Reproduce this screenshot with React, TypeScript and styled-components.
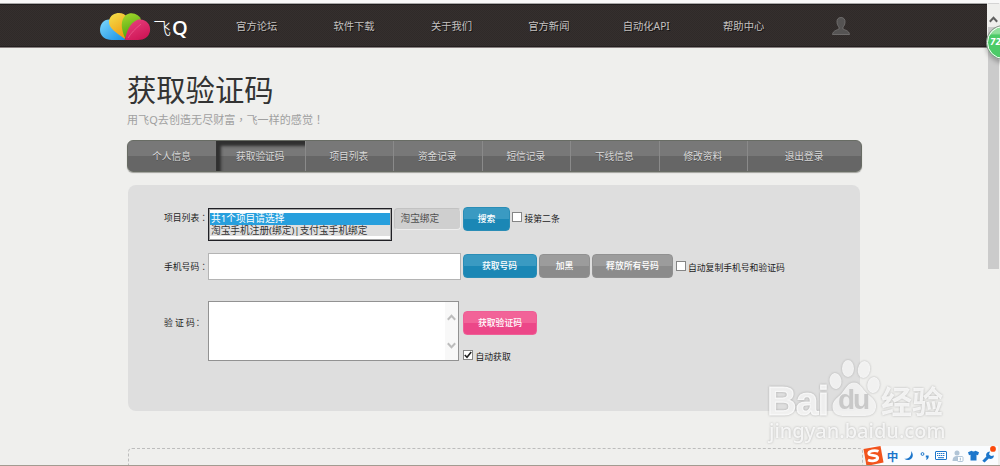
import React from "react";
import styled, { createGlobalStyle, css } from "styled-components";

const GlobalStyle = createGlobalStyle`
  * { box-sizing: border-box; }
  body {
    margin: 0;
    background: #efefed;
    font-family: "Noto Sans", "Noto Sans CJK SC", sans-serif;
    overflow: hidden;
  }
`;

const Window = styled.div`
  position: relative;
  width: 1000px;
  height: 466px;
  overflow: hidden;
  border-top: 3px solid #f8f8f8;
  border-bottom: 1px solid #a39b91;
  display: flex;
`;

const Page = styled.div`
  width: 988px;
  display: flex;
  flex-direction: column;
`;

const Header = styled.header`
  width: 987px;
  height: 45px;
  flex: none;
  padding-left: 99px;
  display: flex;
  align-items: center;
  background: conic-gradient(#352f2e 25%, #2f2a29 0 50%, #352f2e 0 75%, #2f2a29 0) 0 0 / 2px 2px;
  border-top: 1px solid #a9a8a8;
  border-bottom: 1px solid #877f7f;
  box-shadow: inset 0 1px #1f1c1c, inset 0 -1px #242020;
`;

const Logo = styled.div`
  width: 109px;
  display: flex;
  align-items: center;
  color: #fff;
`;

const LogoText = styled.span`
  display: flex;
  align-items: center;
  margin: 5px 0 0 2px;
  font-size: 18px;
  line-height: 24px;
  font-weight: 300;
`;

const LogoLetter = styled.b`
  font: 600 20px/24px "Open Sans", sans-serif;
  margin-left: 1px;
`;

const Nav = styled.nav`
  display: grid;
  grid-template-columns: repeat(7, 97.4px);
  align-items: center;
  justify-items: center;
`;

const NavLink = styled.a`
  padding-top: 1px;
  font-size: 10.3px;
  line-height: 18px;
  color: #c4c1c0;
  text-shadow: 1px 1px #151313;
`;

const Main = styled.main`
  padding: 23px 0 0 127px;
  display: flex;
  flex-direction: column;
`;

const Title = styled.h1`
  margin: 0;
  font-size: 29.3px;
  line-height: 38px;
  height: 38px;
  font-weight: 400;
  color: #333;
`;

const Subtitle = styled.p`
  margin: 0;
  padding-top: 2px;
  font-size: 11px;
  line-height: 16px;
  letter-spacing: 0.08px;
  height: 19px;
  color: #a0a0a0;
`;

/* Full-width punctuation centred in its cell */
const Mark = styled.span`
  font-family: "Noto Sans CJK TC", sans-serif;
`;

const Tabs = styled.div`
  width: 735px;
  height: 32px;
  margin-top: 12px;
  display: grid;
  grid-template-columns: 88px repeat(6, 88.5px) 1fr;
  border: 1px solid #686c64;
  border-radius: 6px;
  overflow: hidden;
  background: linear-gradient(#787878 0 50%, #666 50% 100%);
  box-shadow: 0 1px 1px #a0a09c;
`;

const Tab = styled.a<{ $active?: boolean }>`
  display: flex;
  align-items: center;
  justify-content: center;
  padding-right: 1px;
  font-size: 9.7px;
  color: #d8d8d8;
  text-shadow: 0 1px #505050;
  & + & { border-left: 1px solid #8a8a8a; }
  ${(p) => p.$active && css`
    && { border-left-color: #333; }
    box-shadow: inset 5px 6px 3px -1px #303030;
  `}
`;

const Panel = styled.section`
  width: 732px;
  height: 226px;
  margin: 13px 0 0 1px;
  padding: 22px 0 0 36px;
  border-radius: 8px;
  background: #dedede;
  display: flex;
  flex-direction: column;
`;

const Row = styled.div<{ $height: number }>`
  display: flex;
  align-items: flex-start;
  height: ${(p) => p.$height}px;
`;

const Label = styled.label<{ $top: number; $spacing?: number }>`
  width: 44px;
  flex: none;
  white-space: nowrap;
  padding-top: ${(p) => p.$top}px;
  font-size: 8.8px;
  line-height: 12px;
  letter-spacing: ${(p) => p.$spacing ?? 0}px;
  color: #1c1c1c;
`;

const TightMark = styled(Mark)`
  margin-left: -3.5px;
`;

const ListBox = styled.div`
  width: 184px;
  height: 33px;
  margin-top: 1px;
  padding: 4px 0;
  border: 1px solid #202025;
  outline: 1px solid rgba(50, 50, 50, 0.45);
  outline-offset: -2px;
  background: #fff;
`;

const Option = styled.div<{ $selected?: boolean }>`
  height: ${(p) => (p.$selected ? 12 : 11)}px;
  margin: 0 1px;
  padding-left: 1px;
  font-size: 9.7px;
  line-height: 11px;
  white-space: nowrap;
  color: ${(p) => (p.$selected ? "#fff" : "#333")};
  background: ${(p) => (p.$selected ? "#279fdd" : "#dfdfdf")};
`;

const Keyword = styled.div`
  width: 67px;
  height: 22px;
  margin: 1px 0 0 1.5px;
  padding-left: 6px;
  border: 1px solid #c2c2c2;
  border-right-color: #eee;
  border-bottom-color: #eee;
  border-radius: 4px;
  background: #cfcfcf;
  font-size: 9.7px;
  line-height: 19px;
  color: #505050;
`;

const tones = {
  blue: ["#3a9ac2", "#1b87b5", "#2a8db6"],
  grey: ["#9c9c9c", "#8b8b8b", "#919191"],
  pink: ["#f26398", "#ec4788", "#ef5e96"],
};

const Button = styled.button<{ $tone: keyof typeof tones; $width: number; $gap?: number }>`
  width: ${(p) => p.$width}px;
  height: 24px;
  flex: none;
  margin: 0 0 0 ${(p) => p.$gap ?? 3}px;
  padding: 0;
  border: 1px solid ${(p) => tones[p.$tone][2]};
  border-radius: 4px;
  background: linear-gradient(${(p) => tones[p.$tone][0]} 0 50%, ${(p) => tones[p.$tone][1]} 50% 100%);
  color: #fff;
  font: 500 8.8px/20px "Noto Sans", "Noto Sans CJK SC", sans-serif;
  white-space: nowrap;
`;

const Check = styled.label<{ $top: number; $left: number }>`
  display: flex;
  align-items: flex-start;
  gap: 2.5px;
  margin: ${(p) => p.$top}px 0 0 ${(p) => p.$left}px;
  font-size: 8.8px;
  line-height: 13px;
  white-space: nowrap;
  color: #1c1c1c;
`;

const Box = styled.span`
  width: 10px;
  height: 10px;
  border: 1px solid #858585;
  background: #fff;
  display: flex;
`;

const CheckText = styled.span`
  padding-top: 1px;
`;

const PhoneInput = styled.div`
  width: 253px;
  height: 27px;
  border: 1px solid #b4b4b4;
  background: #fff;
`;

const PhoneActions = styled.div`
  display: flex;
  align-items: flex-start;
  padding-top: 1px;
`;

const CodeArea = styled.div`
  width: 251px;
  height: 60px;
  border: 1px solid #929292;
  background: #fff;
  display: flex;
  justify-content: flex-end;
`;

const AreaScroll = styled.div`
  width: 13px;
  padding: 12px 0 11px;
  background: #f8f8f8;
  display: flex;
  flex-direction: column;
  justify-content: space-between;
  align-items: center;
`;

const CodeActions = styled.div`
  display: flex;
  flex-direction: column;
  padding-top: 10px;
`;

const DashedPanel = styled.section`
  width: 735px;
  height: 40px;
  margin: 37px 0 0 1px;
  border: 1px dashed #bdbdbd;
  border-radius: 4px;
`;

const Scrollbar = styled.aside`
  width: 11px;
  border-top: 1px solid #d4d4d4;
  display: flex;
  flex-direction: column;
  align-items: center;
  padding-top: 12px;
`;

const Thumb = styled.div`
  width: 11px;
  height: 242px;
  margin-top: 4px;
  background: #cbcbcb;
`;

const Badge = styled.div`
  position: absolute;
  left: 986px;
  top: 22px;
  width: 35px;
  height: 35px;
  border: 1px solid #909090;
  outline: 1px solid #fff;
  outline-offset: -2px;
  border-radius: 50%;
  background: linear-gradient(#92df9e 0 22%, #4dcb68 28%);
  box-shadow: 0 3px 4px rgba(0, 0, 0, 0.25);
  color: #fff;
  font: italic bold 8px/33px "DejaVu Sans", sans-serif;
  padding-left: 3px;
`;

const Watermark = styled.div`
  position: absolute;
  left: 767px;
  top: 355px;
  width: 184px;
  height: 88px;
  color: rgba(255, 255, 255, 0.8);
  filter: drop-shadow(0 0 0.8px rgba(120, 120, 120, 0.6));
`;

const Brand = styled.div`
  height: 59px;
  display: flex;
  align-items: flex-end;
`;

const BrandLatin = styled.b`
  width: 61px;
  font: bold 41px/41px "Liberation Sans", sans-serif;
  letter-spacing: -0.8px;
  margin-bottom: -5px;
  -webkit-text-stroke: 1px rgba(255, 255, 255, 0.8);
`;

const BrandHan = styled.b`
  font: bold 31px/32px "Noto Sans CJK SC", sans-serif;
  margin: 0 0 1px 1px;
  white-space: nowrap;
`;

const PawWrap = styled.div`
  position: relative;
  width: 52px;
  height: 58px;
  flex: none;
`;

const PawText = styled.b`
  position: absolute;
  left: 10px;
  top: 27px;
  font: bold 28px/28px "Liberation Sans", sans-serif;
  letter-spacing: -2px;
  color: #c9c9c9;
`;

const Site = styled.div`
  margin: 2px 0 0 2px;
  font: 500 20px/24px "Noto Sans", sans-serif;
`;

const ImeBar = styled.div`
  position: absolute;
  left: 862px;
  top: 443px;
  width: 136px;
  height: 20px;
  display: flex;
  align-items: center;
  background: linear-gradient(90deg, transparent 8px, #fafcfe 8px);
  border-bottom: 1px solid #c8d5e2;
  background-clip: padding-box;
`;

const ImeSlot = styled.span<{ $width: number }>`
  width: ${(p) => p.$width}px;
  display: flex;
  justify-content: center;
  color: #1c76cb;
  font: bold 11.5px/16px "Noto Sans CJK SC", sans-serif;
`;

const CloudSvg = styled.svg`
  margin-top: 1px;
`;

const Cloud = () => (
  <CloudSvg width="52" height="29" viewBox="0 0 52 29">
    <defs>
      <linearGradient id="sky" x1="0" y1="0" x2="1" y2="1">
        <stop stopColor="#7ed8fb" /><stop offset="1" stopColor="#168fe5" />
      </linearGradient>
      <linearGradient id="sun" x1="0" y1="0" x2=".5" y2="1">
        <stop stopColor="#f4e24d" /><stop offset="1" stopColor="#f19c12" />
      </linearGradient>
      <linearGradient id="leaf" x1="0" y1="0" x2=".3" y2="1">
        <stop stopColor="#a9db2c" /><stop offset="1" stopColor="#4ba412" />
      </linearGradient>
      <linearGradient id="rose" x1="0" y1="0" x2=".6" y2="1">
        <stop stopColor="#e94480" /><stop offset="1" stopColor="#cf1657" />
      </linearGradient>
    </defs>
    <path d="M26 28H13C6 28 1 24 1 18C1 11 6 6 13 8C19 11 24 19 26 28Z" fill="url(#sky)" />
    <path d="M26 27C18 21 9 16 10 9C11 3 16 1 20 1C27 1 31 7 29 14Z" fill="url(#sun)" />
    <path d="M26 26C22 17 21 8 27 3C33-1 41 3 42 8L36 17Z" fill="url(#leaf)" />
    <path d="M26 28C27 20 31 11 38 8C46 6 52 12 51 19C50 25 45 28 39 28Z" fill="url(#rose)" />
    <path d="M29 26C32 21 36 17 42 12" stroke="#f67aa5" strokeWidth=".8" fill="none" opacity=".6" />
  </CloudSvg>
);

const UserIcon = () => (
  <svg width="18" height="18" viewBox="0 0 18 18">
    <path
      d="M9 .5c3 0 4.300 2 4 5-.3 2.500-1 3.500-2 4.500v2c1 .8 6.300 1.500 6.500 5.500H.5c.2-4 5.500-4.700 6.500-5.500v-2c-1-1-1.700-2-2-4.500-.3-3 1-5 4-5Z"
      fill="#555353" stroke="#777575" strokeWidth=".8"
    />
  </svg>
);

const Chevron = ({ down, color }: { down?: boolean; color: string }) => (
  <svg width="9" height="7" viewBox="0 0 9 7">
    <path d={down ? "M.8 1.200 4.500 5.200 8.200 1.200" : "M.8 5.800 4.500 1.800 8.200 5.800"} fill="none" stroke={color} strokeWidth="2" />
  </svg>
);

const Paw = () => (
  <svg width="52" height="58" viewBox="0 0 52 58" fill="#fff" fillOpacity=".8">
    <ellipse cx="7.500" cy="22" rx="6" ry="8" transform="rotate(-8 7.500 22)" />
    <ellipse cx="20" cy="9.500" rx="6" ry="8.500" />
    <ellipse cx="36" cy="10.500" rx="6.200" ry="8.500" transform="rotate(10 36 10.500)" />
    <ellipse cx="45.500" cy="26" rx="6.200" ry="8" transform="rotate(8 45.500 26)" />
    <path d="M26 23.500c6 0 8 6 13 11 5 4 10 8 9 14-1 8-8 8.500-13 8.500H17C10 57 5 55 4.500 48.500 4 41 10 39 14 34c4-5 6-10.500 12-10.500Z" />
  </svg>
);

const SLogo = () => (
  <svg width="21" height="20" viewBox="0 0 21 20">
    <path d="M.5 3 17.500 0 20.500 16.500 3.500 20Z" fill="#f2541d" />
    <path d="M15.500 5.300C12 3.800 5.500 4.800 5.800 7.600 6 10.200 14.500 8.600 14.700 11.800 14.800 14.800 8.500 15.700 5 14" fill="none" stroke="#fff" strokeWidth="2.800" />
  </svg>
);

const Moon = () => (
  <svg width="10" height="11" viewBox="0 0 10 11" fill="#1c76cb"><path d="M7.200 1C12 7.500 5 12.500.3 8.800 4.500 9 7.800 6 7.200 1Z" /></svg>
);

const Punctuation = () => (
  <svg width="10" height="10" viewBox="0 0 10 10">
    <circle cx="2.500" cy="3" r="1.400" fill="none" stroke="#1c76cb" />
    <path d="M5.800 4.500h2.800c.4 2-.5 3.800-2.300 4.200l-.4-.7c.8-.4 1-.9.900-1.500h-1Z" fill="#1c76cb" />
  </svg>
);

const Keyboard = () => (
  <svg width="12" height="9" viewBox="0 0 12 9">
    <rect x=".5" y=".5" width="11" height="8" rx=".5" fill="#fff" stroke="#1c76cb" />
    <path d="M2 2.500h8M2 4.500h8" stroke="#1c76cb" strokeWidth="1.100" strokeDasharray="1.300 .6" />
    <path d="M3 6.700h6" stroke="#1c76cb" />
  </svg>
);

const Person = () => (
  <svg width="12" height="12" viewBox="0 0 12 12">
    <circle cx="5" cy="3" r="2.500" fill="#b0c4d6" />
    <path d="M.5 11C.5 7.500 2 6 5 6s4.500 2 4.500 5Z" fill="#b0c4d6" />
    <rect x="5.500" y="6.500" width="5.500" height="5" rx="1" fill="#fff" stroke="#9eb7ce" strokeWidth=".8" />
    <path d="M8.300 7.700v2.800" stroke="#9eb7ce" />
  </svg>
);

const Shirt = () => (
  <svg width="11" height="11" viewBox="0 0 11 11"><path d="M3.500.7c1 1.100 3 1.100 4 0L11 2.300 10 5.200 8.500 4.800V10.500h-6V4.800L1 5.200 0 2.300Z" fill="#1c76cb" /></svg>
);

const Wrench = () => (
  <svg width="14" height="20" viewBox="0 0 14 20">
    <path d="M8 5.500 7 8.200 9 10l3-.6C11.500 13 8.500 13.500 6.800 12.500L2.500 16.500.3 14.700 4.400 10.400C3.500 8 5 5.800 8 5.500Z" fill="#1c76cb" />
    <circle cx="11" cy="2.900" r="2.900" fill="#fb4a0c" />
  </svg>
);

const navItems = ["官方论坛", "软件下载", "关于我们", "官方新闻", "自动化API", "帮助中心"];
const tabItems = ["个人信息", "获取验证码", "项目列表", "资金记录", "短信记录", "下线信息", "修改资料", "退出登录"];

export default function App() {
  return (
    <>
      <GlobalStyle />
      <Window>
        <Page>
          <Header>
            <Logo>
              <Cloud />
              <LogoText>飞<LogoLetter>Q</LogoLetter></LogoText>
            </Logo>
            <Nav>
              {navItems.map((item) => <NavLink key={item}>{item}</NavLink>)}
              <UserIcon />
            </Nav>
          </Header>
          <Main>
            <Title>获取验证码</Title>
            <Subtitle>用飞Q去创造无尽财富<Mark>，</Mark>飞一样的感觉<Mark>！</Mark></Subtitle>
            <Tabs>
              {tabItems.map((item, i) => <Tab key={item} $active={i === 1}>{item}</Tab>)}
            </Tabs>
            <Panel>
              <Row $height={46}>
                <Label $top={5}>项目列表<Mark>：</Mark></Label>
                <ListBox>
                  <Option $selected>共1个项目请选择</Option>
                  <Option>淘宝手机注册(绑定)|支付宝手机绑定</Option>
                </ListBox>
                <Keyword>淘宝绑定</Keyword>
                <Button $tone="blue" $width={47} $gap={2.5}>搜索</Button>
                <Check $top={5} $left={2}><Box /><CheckText>接第二条</CheckText></Check>
              </Row>
              <Row $height={48}>
                <Label $top={8}>手机号码<Mark>：</Mark></Label>
                <PhoneInput />
                <PhoneActions>
                  <Button $tone="blue" $width={74} $gap={1.5}>获取号码</Button>
                  <Button $tone="grey" $width={51} $gap={2.5}>加黑</Button>
                  <Button $tone="grey" $width={81} $gap={2}>释放所有号码</Button>
                  <Check $top={7} $left={2.5}><Box /><CheckText>自动复制手机号和验证码</CheckText></Check>
                </PhoneActions>
              </Row>
              <Row $height={62}>
                <Label $top={16} $spacing={2.2}>验证码<TightMark>：</TightMark></Label>
                <CodeArea>
                  <AreaScroll>
                    <Chevron color="#bdbdbd" />
                    <Chevron color="#bdbdbd" down />
                  </AreaScroll>
                </CodeArea>
                <CodeActions>
                  <Button $tone="pink" $width={74} $gap={4}>获取验证码</Button>
                  <Check $top={15} $left={4}>
                    <Box>
                      <svg width="8" height="8" viewBox="0 0 8 8"><path d="M.8 4 3 6.300 7.200 1" fill="none" stroke="#222" strokeWidth="1.600" /></svg>
                    </Box>
                    <CheckText>自动获取</CheckText>
                  </Check>
                </CodeActions>
              </Row>
            </Panel>
            <DashedPanel />
          </Main>
        </Page>
        <Scrollbar>
          <Chevron color="#606060" />
          <Thumb />
        </Scrollbar>
        <Badge>72</Badge>
        <Watermark>
          <Brand>
            <BrandLatin>Bai</BrandLatin>
            <PawWrap><Paw /><PawText>du</PawText></PawWrap>
            <BrandHan>经验</BrandHan>
          </Brand>
          <Site>jingyan.baidu.com</Site>
        </Watermark>
        <ImeBar>
          <ImeSlot $width={22}><SLogo /></ImeSlot>
          <ImeSlot $width={17}>中</ImeSlot>
          <ImeSlot $width={16}><Moon /></ImeSlot>
          <ImeSlot $width={15}><Punctuation /></ImeSlot>
          <ImeSlot $width={17}><Keyboard /></ImeSlot>
          <ImeSlot $width={17}><Person /></ImeSlot>
          <ImeSlot $width={14}><Shirt /></ImeSlot>
          <ImeSlot $width={18}><Wrench /></ImeSlot>
        </ImeBar>
      </Window>
    </>
  );
}
